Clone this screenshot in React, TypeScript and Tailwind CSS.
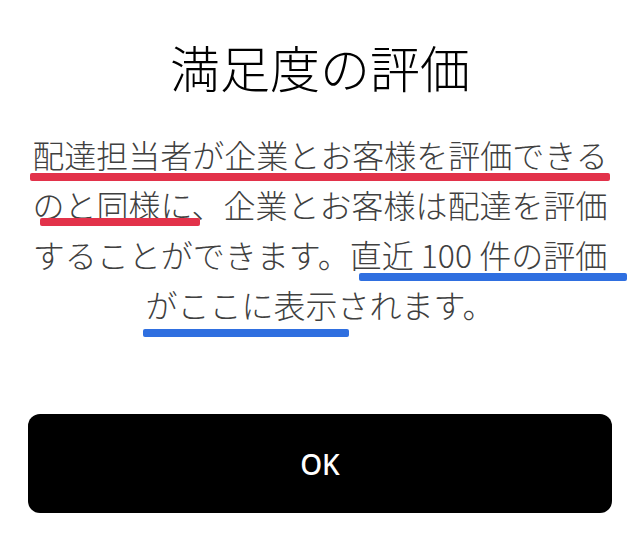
import React from "react";

const jp = { fontFamily: '"Noto Sans CJK JP", "Noto Sans", sans-serif' };

// hand-drawn highlight strokes sitting under the text
function Mark({ className }: { className: string }) {
  return <span aria-hidden className={`absolute block rounded-[2px] ${className}`} />;
}

export default function App() {
  return (
    <div className="flex h-[544px] w-[640px] flex-col bg-white" style={jp}>
      <h1 className="mt-[36px] text-center text-[50px] font-light leading-[60px] text-black">
        満足度の評価
      </h1>

      <div className="mt-[33px] whitespace-nowrap text-center text-[32px] font-light leading-[50px] text-[#404040]">
        <div className="relative h-[50px]">
          配達担当者が企業とお客様を評価できる
          <Mark className="left-[30px] top-[44px] h-[8px] w-[580px] bg-[#e2324a]" />
        </div>
        <div className="relative h-[50px]">
          のと同様に、企業とお客様は配達を評価
          <Mark className="left-[40px] top-[39px] h-[8px] w-[160px] bg-[#e2324a]" />
        </div>
        <div className="relative h-[50px]">
          することができます。直近 100 件の評価
          <Mark className="left-[359px] top-[44px] h-[8px] w-[268px] bg-[#2f6fe0]" />
        </div>
        <div className="relative h-[50px]">
          がここに表示されます。
          <Mark className="left-[143px] top-[50px] h-[8px] w-[206px] bg-[#2f6fe0]" />
        </div>
      </div>

      <div className="mt-auto px-[28px] pb-[31px]">
        <button
          type="button"
          className="flex h-[99px] w-full items-center justify-center rounded-[12px] bg-black text-[28px] font-medium text-white"
          style={{ fontFamily: '"Noto Sans", sans-serif' }}
        >
          OK
        </button>
      </div>
    </div>
  );
}
